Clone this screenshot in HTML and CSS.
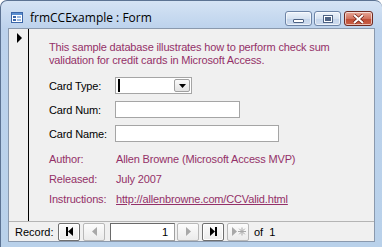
FILE: index.html
```html
<!DOCTYPE html>
<html lang="en">
<head>
    <meta charset="UTF-8">
    <title>frmCCExample : Form</title>
    <link rel="stylesheet" href="styles.css">
</head>
<body>
    <div class="window">
        <div class="titlebar">
            <svg class="app-icon" width="12" height="11" viewBox="0 0 12 11">
                <rect x="0.5" y="0.5" width="11" height="10" fill="#fff" stroke="#3b66a8"/>
                <rect x="1" y="1" width="10" height="2" fill="#5b8fd0"/>
                <rect x="2" y="4" width="3" height="2" fill="#3b66a8"/>
                <rect x="6" y="4" width="4" height="2" fill="#9ab8e0"/>
                <rect x="2" y="7" width="3" height="2" fill="#3b66a8"/>
                <rect x="6" y="7" width="4" height="2" fill="#9ab8e0"/>
            </svg>
            <span class="title">frmCCExample : Form</span>
            <div class="caption-btns">
                <span class="cbtn"><span class="glyph-min"></span></span>
                <span class="cbtn"><span class="glyph-max"></span></span>
                <span class="cbtn close">
                    <svg width="13" height="10" viewBox="0 0 13 10">
                        <path d="M2 1 L11 9 M11 1 L2 9" stroke="#6b1c12" stroke-width="3.4"/>
                        <path d="M2 1 L11 9 M11 1 L2 9" stroke="#fff" stroke-width="2"/>
                    </svg>
                </span>
            </div>
        </div>

        <div class="client">
            <div class="detail">
                <div class="selector"><span class="current"></span></div>
                <div class="form">
                    <p class="intro">This sample database illustrates how to perform check sum validation for credit cards in Microsoft Access.</p>

                    <div class="field">
                        <label class="field-label">Card Type:</label>
                        <div class="combo">
                            <span class="caret"></span>
                            <span class="drop">
                                <svg width="7" height="4" viewBox="0 0 7 4"><path d="M0 0 H7 L3.5 4 Z" fill="#000"/></svg>
                            </span>
                        </div>
                    </div>
                    <div class="field">
                        <label class="field-label">Card Num:</label>
                        <div class="textbox num"></div>
                    </div>
                    <div class="field">
                        <label class="field-label">Card Name:</label>
                        <div class="textbox name"></div>
                    </div>

                    <div class="info">
                        <div class="info-row"><span class="info-label">Author:</span><span>Allen Browne (Microsoft Access MVP)</span></div>
                        <div class="info-row"><span class="info-label">Released:</span><span>July 2007</span></div>
                        <div class="info-row"><span class="info-label">Instructions:</span><a href="#">http://allenbrowne.com/CCValid.html</a></div>
                    </div>
                </div>
            </div>

            <div class="navbar">
                <span class="nav-label">Record:</span>
                <span class="nav-btn focus">
                    <svg width="9" height="9" viewBox="0 0 9 9"><rect x="1" y="0" width="2" height="9" fill="#000"/><path d="M8 0 V9 L3 4.5 Z" fill="#000"/></svg>
                </span>
                <span class="nav-btn">
                    <svg width="9" height="9" viewBox="0 0 9 9"><path d="M7 0 V9 L2 4.5 Z" fill="#a8a8a8"/></svg>
                </span>
                <span class="nav-current">1</span>
                <span class="nav-btn">
                    <svg width="9" height="9" viewBox="0 0 9 9"><path d="M2 0 V9 L7 4.5 Z" fill="#a8a8a8"/></svg>
                </span>
                <span class="nav-btn focus">
                    <svg width="9" height="9" viewBox="0 0 9 9"><path d="M1 0 V9 L6 4.5 Z" fill="#000"/><rect x="6" y="0" width="2" height="9" fill="#000"/></svg>
                </span>
                <span class="nav-btn">
                    <svg width="15" height="9" viewBox="0 0 15 9"><path d="M1 0 V9 L6 4.5 Z" fill="#a8a8a8"/><path d="M11 0.5 V8.5 M7 4.5 H15 M8.2 1.7 L13.8 7.3 M13.8 1.7 L8.2 7.3" stroke="#a8a8a8" stroke-width="1"/></svg>
                </span>
                <span class="nav-of">of&nbsp; 1</span>
            </div>
        </div>
    </div>
</body>
</html>
```

FILE: styles.css
```css
* { box-sizing: border-box; }
body {
    margin: 0;
    width: 382px;
    height: 247px;
    overflow: hidden;
    background: #fff;
    font-family: 'Liberation Sans', Arial, sans-serif;
}
.window {
    height: 247px;
    display: flex;
    flex-direction: column;
    border: 1px solid #5c7393;
    border-bottom: none;
    border-right: none;
    border-radius: 7px 7px 0 0;
    background: linear-gradient(#d5e3f4, #bcd2ec 28px, #b9d1ea);
}
.titlebar {
    height: 27px;
    display: flex;
    align-items: flex-start;
}
.app-icon {
    margin: 11px 0 0 10px;
}
.title {
    margin: 8px 0 0 7px;
    font-family: 'Open Sans', sans-serif;
    font-size: 12px;
    color: #000;
}
.caption-btns {
    margin: 10px 9px 0 auto;
    display: flex;
    gap: 2px;
}
.cbtn {
    width: 27px;
    height: 15px;
    border: 1px solid #6d84a6;
    border-radius: 3px;
    background: linear-gradient(#eef3fa, #d6e2f1 50%, #c3d4ea 51%, #cfdcee);
    display: flex;
    align-items: center;
    justify-content: center;
    box-shadow: inset 0 0 0 1px rgba(255,255,255,0.6);
}
.cbtn.close {
    width: 29px;
    margin-left: 1px;
    border-color: #6e2a22;
    background: linear-gradient(#e8a898, #d1735f 50%, #bf4b34 51%, #c95f45);
}
.glyph-min {
    width: 11px;
    height: 4px;
    margin-top: 4px;
    background: #fff;
    border: 1px solid #4d6283;
    border-radius: 1px;
}
.glyph-max {
    width: 10px;
    height: 8px;
    border: 1px solid #4d6283;
    background: #fff;
    box-shadow: inset 0 0 0 1px #fff, inset 0 0 0 3px #4d6283;
}

.client {
    flex: 1;
    margin: 0 7px 5px 7px;
    border: 1px solid #8a99ad;
    background: #f0f0f0;
    display: flex;
    flex-direction: column;
}
.detail {
    flex: 1;
    display: flex;
}
.selector {
    width: 20px;
    border-right: 1px solid #000;
}
.current {
    display: block;
    width: 0;
    height: 0;
    margin: 4px 0 0 8px;
    border-left: 5px solid #000;
    border-top: 5px solid transparent;
    border-bottom: 5px solid transparent;
}
.form {
    flex: 1;
    padding: 12px 0 0 20px;
    font-size: 11px;
    letter-spacing: -0.15px;
}
.intro {
    margin: 0 0 10px;
    width: 300px;
    line-height: 13px;
    color: #943068;
}
.field {
    display: flex;
    align-items: center;
    height: 17px;
    margin-bottom: 7px;
}
.field-label {
    width: 66px;
    color: #000;
}
.combo {
    width: 77px;
    height: 17px;
    border: 1px solid #a5a5a5;
    background: #fff;
    display: flex;
    align-items: center;
    justify-content: space-between;
    padding: 0 1px 0 2px;
}
.caret {
    width: 2px;
    height: 13px;
    background: #000;
}
.drop {
    width: 16px;
    height: 13px;
    border: 1px solid #a0a0a0;
    border-radius: 2px;
    background: linear-gradient(#fafafa, #e3e3e3);
    display: flex;
    align-items: center;
    justify-content: center;
}
.textbox {
    height: 17px;
    border: 1px solid #a5a5a5;
    background: #fff;
}
.textbox.num { width: 125px; }
.textbox.name { width: 164px; }
.info {
    margin-top: 3px;
    color: #943068;
}
.info-row {
    display: flex;
    align-items: center;
    height: 20px;
}
.info-label {
    width: 67px;
}
.info a {
    color: #943068;
}

.navbar {
    height: 20px;
    border-top: 1px solid #b4b4b4;
    display: flex;
    align-items: center;
    padding-left: 6px;
    font-size: 11px;
    color: #000;
}
.nav-label {
    width: 43px;
}
.nav-btn {
    width: 22px;
    height: 18px;
    margin-right: 3px;
    border: 1px solid #b8b8b8;
    border-radius: 2px;
    background: linear-gradient(#fcfcfc, #ebebeb);
    display: flex;
    align-items: center;
    justify-content: center;
}
.nav-btn.focus {
    border-color: #6f6f6f;
    box-shadow: inset 0 0 0 1px #fff;
}
.nav-current {
    width: 65px;
    height: 18px;
    margin: 0 2px 0 2px;
    border: 1px solid #a0a0a0;
    border-top-color: #6a6a6a;
    border-left-color: #6a6a6a;
    background: #fff;
    text-align: right;
    padding-right: 6px;
    line-height: 16px;
}
.nav-of {
    margin-left: 2px;
}
```
